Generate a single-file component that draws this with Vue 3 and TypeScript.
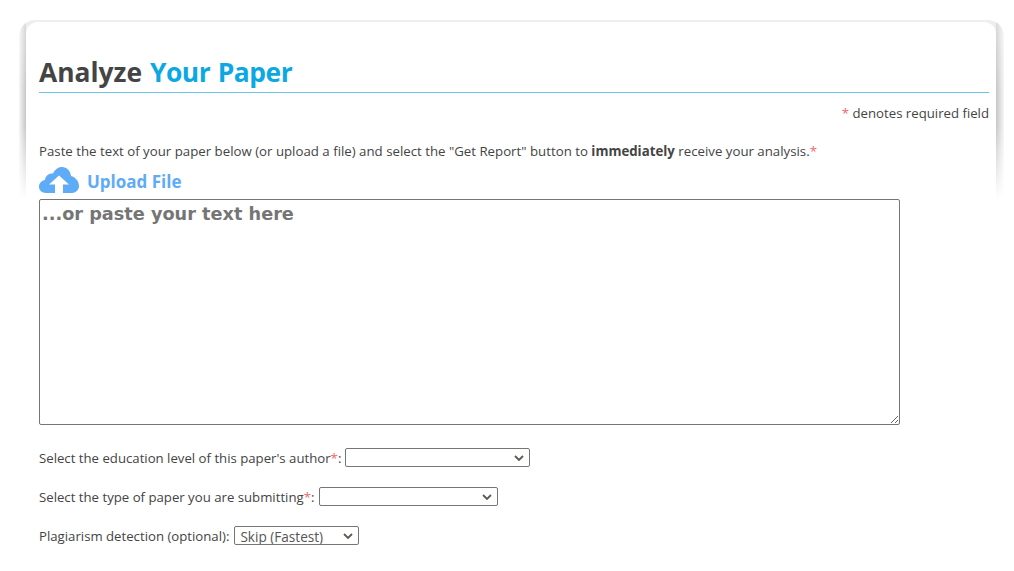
<script setup lang="ts">
import { ref } from 'vue'

const educationLevel = ref('')
const paperType = ref('')
const plagiarism = ref('skip')
const paperText = ref('')
</script>

<template>
  <main class="page">
    <section class="frame">
      <div class="frame__inner">
        <h1 class="title">Analyze <span class="title__accent">Your Paper</span></h1>
        <p class="required-note"><span class="star">*</span> denotes required field</p>
        <p class="intro">
          Paste the text of your paper below (or upload a file) and select the "Get Report" button to
          <strong>immediately</strong> receive your analysis.<span class="star">*</span>
        </p>
        <a class="upload" href="#" @click.prevent>
          <svg class="upload__icon" viewBox="0 1 40 28" width="40" height="28" aria-hidden="true">
            <path
              fill="#5eabf6"
              d="M7 27C3 27 0 24.500 0 20.800 0 17 3 14.500 6 14 6.500 9.500 10 7 14 7.500 16 3.500 19 1 23 1 28 1 31.500 5 32 10 36.500 11 40 15.500 40 20 40 24 36.500 27 33 27H24V18.500H30L20 9.500 10 18.500H16V27Z"
            />
          </svg>
          <span>Upload File</span>
        </a>
        <textarea v-model="paperText" class="paper" placeholder="...or paste your text here"></textarea>
        <div class="field">
          <label for="level">Select the education level of this paper's author<span class="star">*</span>:</label>
          <select id="level" v-model="educationLevel" class="select select--level">
            <option value=""></option>
          </select>
        </div>
        <div class="field">
          <label for="type">Select the type of paper you are submitting<span class="star">*</span>:</label>
          <select id="type" v-model="paperType" class="select select--type">
            <option value=""></option>
          </select>
        </div>
        <div class="field">
          <label for="plagiarism">Plagiarism detection (optional):</label>
          <select id="plagiarism" v-model="plagiarism" class="select select--plagiarism">
            <option value="skip">Skip (Fastest)</option>
          </select>
        </div>
      </div>
    </section>
  </main>
</template>

<style>
html,
body {
  background: #fff;
  overflow: hidden;
}
</style>

<style scoped>
.page {
  width: 1014px;
  height: 571px;
  padding: 20px 10px 0 19px;
  box-sizing: border-box;
  font-family: 'Open Sans', 'Liberation Sans', sans-serif;
  font-size: 13.2px;
  color: #444;
}

.frame {
  padding: 2px 8px 0 7px;
  border-radius: 16px 16px 0 0;
  background:
    linear-gradient(to bottom, rgba(255, 255, 255, 0.35) 0, rgba(255, 255, 255, 0) 70px, rgba(255, 255, 255, 0) 105px, #fff 180px),
    linear-gradient(to right, #f6f6f6, #c6c6c6) left top / 7px 100% no-repeat,
    linear-gradient(to left, #f6f6f6, #c6c6c6) right top / 8px 100% no-repeat,
    #e6e6e6;
}

.frame__inner {
  height: 549px;
  padding: 0 7px 0 13px;
  border-radius: 12px 12px 0 0;
  background: #fff;
}

.title {
  margin: 0;
  padding-top: 31px;
  height: 39px;
  border-bottom: 1px solid #6cc3e8;
  font-size: 26.4px;
  line-height: 39px;
  font-weight: 700;
  word-spacing: 1px;
  color: #444;
}

.title__accent {
  color: #0ba8e3;
  letter-spacing: -0.45px;
}

.required-note {
  margin: 10px 0 0;
  line-height: 20px;
  text-align: right;
}

.star {
  color: #f06a6a;
}

.intro {
  margin: 18px 0 0;
  font-size: 13.26px;
  line-height: 20px;
}

.upload {
  display: flex;
  align-items: center;
  gap: 8px;
  height: 28px;
  margin-top: 6px;
  color: #5eabf6;
  font-size: 17px;
  font-weight: 700;
  text-decoration: none;
}

.paper {
  display: block;
  width: 861px;
  height: 226px;
  box-sizing: border-box;
  margin: 4px 0 0;
  padding: 2px;
  border: 1px solid #767676;
  border-radius: 2px;
  font-family: 'DejaVu Sans', Verdana, sans-serif;
  font-size: 17.7px;
  font-weight: 700;
  line-height: 24px;
  outline: none;
}

.paper::placeholder {
  color: #757575;
}

.field {
  display: flex;
  align-items: center;
  gap: 4px;
  height: 19px;
  margin-top: 20px;
}

.paper + .field {
  margin-top: 23px;
}

.select {
  appearance: none;
  height: 19px;
  box-sizing: border-box;
  padding: 0 18px 0 5px;
  border: 1px solid #767676;
  border-radius: 2px;
  background: #fff url("data:image/svg+xml,%3Csvg xmlns='http://www.w3.org/2000/svg' width='10' height='6'%3E%3Cpath d='M1 1l4 4 4-4' fill='none' stroke='%23605850' stroke-width='1.800'/%3E%3C/svg%3E") no-repeat right 5px center;
  color: #555;
  font-family: inherit;
  font-size: 13.6px;
}

.select--level {
  width: 185px;
}

.select--type {
  width: 179px;
  margin-left: 1px;
}

.select--plagiarism {
  width: 125px;
  margin-left: 1px;
}
</style>
